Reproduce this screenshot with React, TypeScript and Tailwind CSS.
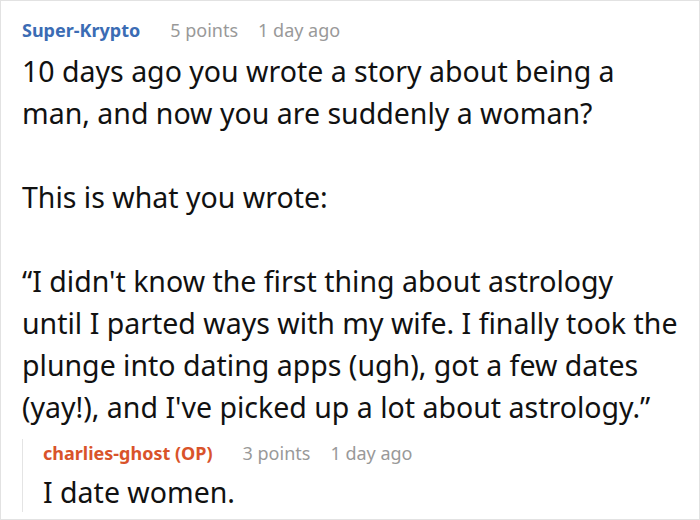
const font = { fontFamily: '"Noto Sans", "Open Sans", sans-serif' };

function Meta({ points, age }: { points: string; age: string }) {
  return (
    <>
      <span className="ml-[30px] text-[#999999]">{points}</span>
      <span className="ml-[20px] text-[#999999]">{age}</span>
    </>
  );
}

export default function App() {
  return (
    <div
      className="h-[520px] w-[700px] overflow-hidden border border-[#e2e2e2] bg-white pl-[21px] pt-[15px] text-[#111111]"
      style={font}
    >
      <div className="text-[18px] leading-[28px]">
        <span className="font-bold text-[#3b6cb4]">Super-Krypto</span>
        <Meta points="5 points" age="1 day ago" />
      </div>

      <div className="mt-[6px] text-[28.5px] leading-[42px]">
        <p>
          10 days ago you wrote a story about being a
          <br />
          man, and now you are suddenly a woman?
        </p>
        <p className="mt-[42px]">This is what you wrote:</p>
        <p className="mt-[42px]">
          “I didn't know the first thing about astrology
          <br />
          until I parted ways with my wife. I finally took the
          <br />
          plunge into dating apps (ugh), got a few dates
          <br />
          (yay!), and I've picked up a lot about astrology.”
        </p>
      </div>

      <div className="mt-[11px] flex">
        <div className="w-[1px] self-stretch bg-[#e4e4e4]" />
        <div className="pl-[20px]">
          <div className="text-[18px] leading-[28px]">
            <span className="font-bold text-[#d9532a]">charlies-ghost (OP)</span>
            <Meta points="3 points" age="1 day ago" />
          </div>
          <p className="mt-[5px] text-[28.5px] leading-[40px]">I date women.</p>
        </div>
      </div>
    </div>
  );
}
